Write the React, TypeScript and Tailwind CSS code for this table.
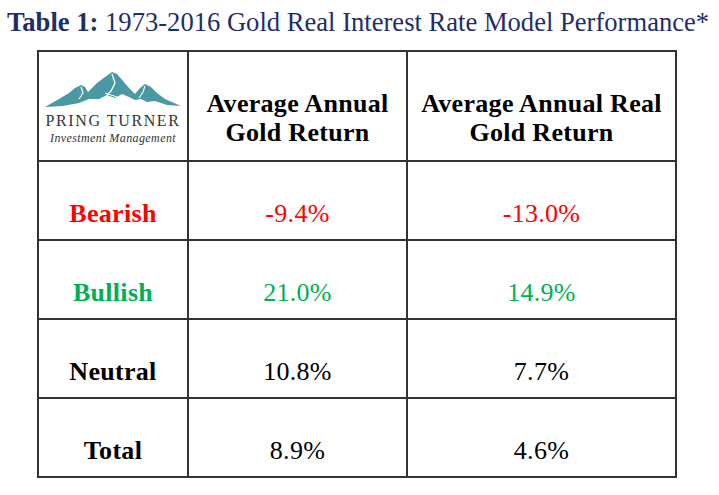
function Logo() {
  return (
    <div className="flex flex-col items-center">
      <svg width="136" height="37" viewBox="0 0 136 37" className="mb-[5px]">
        <path
          d="M0,36 L14,28 L24,22 L30,17 L36,14 L40,16 L43,21 L52,12 L60,6 L67,1 L72,3 L78,10 L84,17 L90,23 L95,17 L100,13 L106,16 L112,22 L120,28 L136,35 L122,34 L110,30 L102,31 L96,28 L90,29 L84,26 L77,23 L70,27 L62,24 L54,28 L44,28 L34,32 L18,35 Z"
          fill="#4a98a4"
        />
        <path d="M67,3 L70,12 L66,20 L62,24" stroke="#fff" strokeWidth="1.3" fill="none" />
        <path d="M36,16 L38,22 L34,28" stroke="#fff" strokeWidth="1.2" fill="none" />
        <path d="M100,15 L98,21 L94,27" stroke="#fff" strokeWidth="1.1" fill="none" />
        <path d="M60,22 L72,26" stroke="#fff" strokeWidth="1" fill="none" />
      </svg>
      <div className="text-[16px] leading-[15px] tracking-[1.6px] text-[#333]">PRING TURNER</div>
      <div className="mt-[4px] text-[12px] leading-[12px] italic tracking-[0.4px] text-[#333]">
        Investment Management
      </div>
    </div>
  );
}

const rows = [
  { label: "Bearish", color: "text-[#ff0000]", a: "-9.4%", b: "-13.0%" },
  { label: "Bullish", color: "text-[#00b050]", a: "21.0%", b: "14.9%" },
  { label: "Neutral", color: "text-black", a: "10.8%", b: "7.7%" },
  { label: "Total", color: "text-black", a: "8.9%", b: "4.6%" },
];

const cell =
  "border-2 border-[#333] text-center align-top font-['Liberation_Serif','Times_New_Roman',serif] text-[26px] leading-[29px] tracking-[0.3px]";

export default function App() {
  return (
    <div className="w-[719px] h-[495px] bg-white font-['Liberation_Serif','Times_New_Roman',serif]">
      <div className="pl-[7px] pt-[8px] h-[50px] text-[26.6px] leading-[29px] text-[#1f2d6b] whitespace-nowrap">
        <span className="font-bold">Table 1:</span> 1973-2016 Gold Real Interest Rate Model Performance*
      </div>
      <table className="ml-[37px] border-collapse table-fixed">
        <tbody>
          <tr className="h-[110px]">
            <td className="w-[150px] border-2 border-[#333] align-middle pt-[2px] font-['Liberation_Serif','Times_New_Roman',serif]">
              <Logo />
            </td>
            <td className={`w-[219px] pt-[37px] font-bold ${cell}`}>
              Average Annual
              <br />
              Gold Return
            </td>
            <td className={`w-[269px] pt-[37px] font-bold ${cell}`}>
              Average Annual Real
              <br />
              Gold Return
            </td>
          </tr>
          {rows.map((r) => (
            <tr key={r.label} className="h-[79px]">
              <td className={`pt-[37px] font-bold ${r.color} ${cell}`}>{r.label}</td>
              <td className={`pt-[37px] ${r.color} ${cell}`}>{r.a}</td>
              <td className={`pt-[37px] ${r.color} ${cell}`}>{r.b}</td>
            </tr>
          ))}
        </tbody>
      </table>
    </div>
  );
}
